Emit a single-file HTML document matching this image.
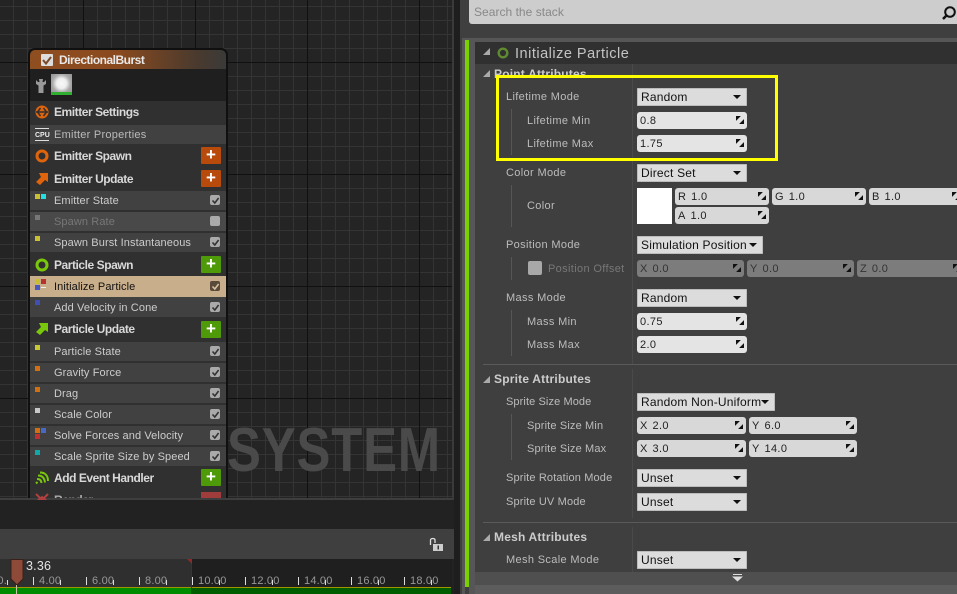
<!DOCTYPE html>
<html><head><meta charset="utf-8"><style>
html,body{margin:0;padding:0;background:#222}
#p{position:relative;width:957px;height:594px;overflow:hidden;background:#222;font-family:"Liberation Sans",sans-serif;font-size:11px;letter-spacing:.35px}
#p div,#p svg{position:absolute}
.t{white-space:nowrap;line-height:14px;height:14px}
.g{background-color:#242424;background-image:linear-gradient(90deg,#101010 1px,transparent 1px),linear-gradient(0deg,transparent 111px,#101010 111px),linear-gradient(90deg,#343434 1px,transparent 1px),linear-gradient(0deg,transparent 13px,#343434 13px);background-size:112px 112px,112px 112px,14px 14px,14px 14px;background-position:83px 0,0 62px,13px 0,0 6px}
.r{left:30px;width:196px}
.h{background:#303030}
.s{background:#414141}
.n{left:54px;color:#ccc;letter-spacing:.1px}
.b{left:54px;color:#d8d8d8;font-weight:bold;font-size:12px;letter-spacing:-.45px}
.c{left:210px;width:10px;height:10px;background:#aaa;border-radius:2px}
.c svg{left:.5px;top:.5px}
.a{left:201px;width:20px;height:17px;border-radius:1px;color:#fff;font:bold 17px/16px "Liberation Sans",sans-serif;text-align:center;letter-spacing:0}
.o{background:#b84a0c}.v{background:#4f9a08}
.dot{width:5px;height:5px}
.l{color:#bcbcbc}
.hb{color:#ccc;font-weight:bold;font-size:12px;left:494px;letter-spacing:.2px}
.f{background:#e4e4e4;border-radius:3px;height:17px;color:#222;line-height:19px;text-indent:3px;white-space:nowrap;word-spacing:-1px}
.d{background:#dcdcdc;height:18px;border-radius:1px;color:#111;font-size:12px;line-height:18px;text-indent:4px;white-space:nowrap;box-shadow:inset 0 0 0 1px #bcbcbc;letter-spacing:.2px}
.d::after{content:"";position:absolute;right:6px;top:7px;border:4px solid transparent;border-top:4px solid #111;border-bottom:0}
.v3{background:#d8d8d8}
.m{background:#7c7c7c;color:#333}
.f svg{right:3px;top:4px}
.tl{color:#999;top:574px;letter-spacing:.2px}
.tk{background:#ddd;width:1px;top:577px;height:8px}
.tm{background:#ddd;width:1px;top:580px;height:5px}
</style></head><body><div id="p">
<svg width="0" height="0"><defs><symbol id="x" viewBox="0 0 9 9"><path d="M0 0H5.500L0 5.500ZM9 9H3.500L9 3.500Z" fill="#111"/></symbol><symbol id="k" viewBox="0 0 9 9"><path d="M1.500 4.500L3.800 7L7.600 2" fill="none" stroke="#333" stroke-width="1.600"/></symbol></defs></svg>

<div class="g" style="left:0;top:0;width:452px;height:498px"></div>
<div style="left:0;top:498px;width:453px;height:2px;background:#3e3e3e"></div>
<div style="left:452px;top:0;width:2px;height:500px;background:#3a3a3a"></div>
<div style="left:454px;top:0;width:6px;height:594px;background:#1e1e1e"></div>
<div class="t" style="left:227px;top:421px;height:60px;font:bold 62px/60px 'Liberation Sans',sans-serif;color:#4a4a4a;transform:scaleX(.82);transform-origin:0 0;letter-spacing:1px">SYSTEM</div>

<!-- node -->
<div style="left:28px;top:48px;width:200px;height:450px;background:#101010;border-radius:7px 7px 0 0"></div>
<div style="left:30px;top:50px;width:196px;height:19px;border-radius:5px 5px 0 0;background:linear-gradient(90deg,#8e4e20,#8a4a1e 45%,#4a3a2e 85%,#3a3a38)"></div>
<div style="left:30px;top:69px;width:196px;height:32px;background:#1f1f1f"></div>
<div style="left:41px;top:54px;width:12px;height:12px;background:#ddd;border-radius:1px"><svg width="12" height="12" style="left:0;top:0"><path d="M2 6L5 9.500L10 3" fill="none" stroke="#7a4a2a" stroke-width="2"/></svg></div>
<div class="t" style="left:59px;top:53px;color:#e8e8e8;font-weight:bold;font-size:12px;letter-spacing:-.5px">DirectionalBurst</div>
<svg width="10" height="14" style="left:36px;top:79px"><path d="M0 1L2 3H3.500L3 0H7L6.500 3H8L10 1V5L7.500 6.500V14H2.500V6.500L0 5Z" fill="#999"/></svg>
<div style="left:51px;top:74px;width:21px;height:21px;background:radial-gradient(circle at 50% 45%,#f8f8f8 0,#eee 5px,#aaa 9px,#8c8c8c 100%)"></div>
<div style="left:51px;top:92px;width:21px;height:3px;background:#30b030"></div>

<div class="r h" style="top:101px;height:24px"></div>
<div class="r s" style="top:125px;height:19px"></div>
<div class="r h" style="top:144px;height:47px"></div>
<div class="r h" style="top:191px;height:61px"></div>
<div class="r s" style="top:191px;height:19px"></div>
<div class="r s" style="top:212px;height:19px;background:#494949"></div>
<div class="r s" style="top:233px;height:19px"></div>
<div class="r h" style="top:252px;height:24px"></div>
<div class="r" style="top:276px;height:21px;background:#c9ae8c"></div>
<div class="r s" style="top:297px;height:20px"></div>
<div class="r h" style="top:317px;height:181px"></div>
<div class="r s" style="top:342px;height:19px"></div>
<div class="r s" style="top:363px;height:19px"></div>
<div class="r s" style="top:384px;height:19px"></div>
<div class="r s" style="top:405px;height:19px"></div>
<div class="r s" style="top:426px;height:19px"></div>
<div class="r s" style="top:447px;height:19px"></div>

<!-- node icons -->
<svg width="14" height="14" style="left:35px;top:105px"><circle cx="7" cy="7" r="6.500" fill="#e0640c"/><path d="M1 7H13" stroke="#303030" stroke-width="1.500"/><path d="M5.500 3L2.500 7L5.500 11M8.500 3L11.500 7L8.500 11" stroke="#303030" stroke-width="1.500" fill="none"/></svg>
<div class="t" style="left:35px;top:128px;width:14px;height:13px;font:bold 7px/13px 'Liberation Sans',sans-serif;color:#eee;letter-spacing:0;border-top:1px solid #ddd;border-bottom:1px solid #ddd;box-sizing:border-box">CPU</div>
<svg width="14" height="14" style="left:35px;top:149px"><circle cx="7" cy="7" r="5" fill="none" stroke="#e0640c" stroke-width="3"/></svg>
<svg width="14" height="14" style="left:35px;top:172px"><path d="M4 1H13V10L10 8L5 13L1 10L6 5Z" fill="#e0640c"/></svg>
<svg width="14" height="14" style="left:35px;top:258px"><circle cx="7" cy="7" r="5" fill="none" stroke="#7ac80c" stroke-width="3"/></svg>
<svg width="14" height="14" style="left:35px;top:322px"><path d="M4 1H13V10L10 8L5 13L1 10L6 5Z" fill="#7ac80c"/></svg>
<svg width="14" height="14" style="left:35px;top:471px"><path d="M1 12.500L2.500 11M2 8C5 8 6 9 6.500 12M3 4.500C7.500 4.500 9.500 7 10 11.500M5 1.500C10.500 1.500 13 5 13 10" stroke="#7ac80c" stroke-width="2" fill="none"/></svg>
<svg width="14" height="9" style="left:35px;top:493px"><path d="M1 1L7 7L13 1M1 9L7 4L13 9" stroke="#b04040" stroke-width="2" fill="none"/></svg>

<div class="dot" style="left:35px;top:194px;background:#c8c030"></div>
<div class="dot" style="left:41px;top:194px;background:#20e0e0"></div>
<div class="dot" style="left:35px;top:215px;background:#777"></div>
<div class="dot" style="left:35px;top:236px;background:#c8c030"></div>
<div class="dot" style="left:35px;top:279px;background:#c8c030"></div>
<div class="dot" style="left:41px;top:279px;background:#b83030"></div>
<div class="dot" style="left:35px;top:285px;background:#4858c0"></div>
<div style="left:41px;top:287px;width:5px;height:1px;background:#eee"></div>
<div class="dot" style="left:35px;top:300px;background:#4050b0"></div>
<div class="dot" style="left:35px;top:345px;background:#c8c830"></div>
<div class="dot" style="left:35px;top:366px;background:#d07010"></div>
<div class="dot" style="left:35px;top:387px;background:#d07010"></div>
<div class="dot" style="left:35px;top:408px;background:#c8c8c8"></div>
<div class="dot" style="left:35px;top:428px;background:#d07010"></div>
<div class="dot" style="left:41px;top:428px;background:#4868c8"></div>
<div class="dot" style="left:35px;top:434px;background:#c03030"></div>
<div class="dot" style="left:35px;top:450px;background:#10a8a8"></div>

<!-- node text -->
<div class="t b" style="top:105px">Emitter Settings</div>
<div class="t n" style="top:128px;color:#bbb;letter-spacing:.25px">Emitter Properties</div>
<div class="t b" style="top:149px">Emitter Spawn</div>
<div class="t b" style="top:172px">Emitter Update</div>
<div class="t n" style="top:194px">Emitter State</div>
<div class="t n" style="top:215px;color:#777">Spawn Rate</div>
<div class="t n" style="top:236px">Spawn Burst Instantaneous</div>
<div class="t b" style="top:258px">Particle Spawn</div>
<div class="t n" style="top:280px;color:#111">Initialize Particle</div>
<div class="t n" style="top:301px">Add Velocity in Cone</div>
<div class="t b" style="top:322px">Particle Update</div>
<div class="t n" style="top:345px">Particle State</div>
<div class="t n" style="top:366px">Gravity Force</div>
<div class="t n" style="top:387px">Drag</div>
<div class="t n" style="top:408px">Scale Color</div>
<div class="t n" style="top:429px">Solve Forces and Velocity</div>
<div class="t n" style="top:450px">Scale Sprite Size by Speed</div>
<div class="t b" style="top:471px">Add Event Handler</div>
<div class="t b" style="top:493px;height:5px;overflow:hidden;color:#aaa">Render</div>

<!-- add buttons -->
<div class="a o" style="top:147px">+</div><div class="a o" style="top:170px">+</div>
<div class="a v" style="top:256px">+</div><div class="a v" style="top:321px">+</div><div class="a v" style="top:469px">+</div>
<div style="left:201px;top:492px;width:20px;height:6px;background:#a03c3c"></div>

<!-- checks -->
<div class="c" style="top:195px"><svg width="9" height="9"><use href="#k"/></svg></div>
<div class="c" style="top:216px"></div>
<div class="c" style="top:237px"><svg width="9" height="9"><use href="#k"/></svg></div>
<div class="c" style="top:281px;background:#5a4a3a"><svg width="9" height="9"><path d="M1.500 4.500L3.800 7L7.600 2" fill="none" stroke="#d8c0a0" stroke-width="1.600"/></svg></div>
<div class="c" style="top:302px"><svg width="9" height="9"><use href="#k"/></svg></div>
<div class="c" style="top:346px"><svg width="9" height="9"><use href="#k"/></svg></div>
<div class="c" style="top:367px"><svg width="9" height="9"><use href="#k"/></svg></div>
<div class="c" style="top:388px"><svg width="9" height="9"><use href="#k"/></svg></div>
<div class="c" style="top:409px"><svg width="9" height="9"><use href="#k"/></svg></div>
<div class="c" style="top:430px"><svg width="9" height="9"><use href="#k"/></svg></div>
<div class="c" style="top:451px"><svg width="9" height="9"><use href="#k"/></svg></div>

<!-- timeline -->
<div style="left:0;top:500px;width:454px;height:29px;background:#222"></div>
<div style="left:0;top:529px;width:454px;height:30px;background:#3f3f3f"></div>
<div style="left:0;top:559px;width:191px;height:28px;background:#2f2f2f"></div>
<div style="left:191px;top:559px;width:261px;height:28px;background:#1f1f1f"></div>
<div style="left:0;top:587px;width:451px;height:1px;background:#a09400"></div>
<div style="left:0;top:588px;width:191px;height:6px;background:#008c00"></div>
<div style="left:191px;top:588px;width:260px;height:6px;background:#005e00"></div>
<div style="left:191px;top:559px;width:1px;height:35px;background:#6a1e1e"></div>
<svg width="5" height="5" style="left:187px;top:559px"><path d="M0 0H5V5Z" fill="#8a2a2a"/></svg>
<div class="t tl" style="left:0;width:7px;overflow:hidden;direction:rtl">.00</div>
<div class="t tl" style="left:39px">4.00</div><div class="t tl" style="left:92px">6.00</div><div class="t tl" style="left:145px">8.00</div>
<div class="t tl" style="left:198px">10.00</div><div class="t tl" style="left:251px">12.00</div><div class="t tl" style="left:304px">14.00</div><div class="t tl" style="left:357px">16.00</div><div class="t tl" style="left:410px">18.00</div>
<div class="tk" style="left:33px"></div><div class="tk" style="left:86px"></div><div class="tk" style="left:139px"></div><div class="tk" style="left:192px"></div><div class="tk" style="left:245px"></div><div class="tk" style="left:298px"></div><div class="tk" style="left:351px"></div><div class="tk" style="left:404px"></div>
<div class="tm" style="left:7px"></div><div class="tm" style="left:60px"></div><div class="tm" style="left:113px"></div><div class="tm" style="left:166px"></div><div class="tm" style="left:219px"></div><div class="tm" style="left:272px"></div><div class="tm" style="left:325px"></div><div class="tm" style="left:378px"></div><div class="tm" style="left:431px"></div>
<svg width="14" height="27" style="left:10px;top:559px"><path d="M1 .5H13V20L7 26L1 20Z" fill="#8e4a38" stroke="#3a2018"/></svg>
<div style="left:16px;top:585px;width:1px;height:9px;background:#c8c8a8"></div>
<div class="t" style="left:26px;top:559px;color:#e4e4e4;font-size:12.500px;letter-spacing:.2px">3.36</div>
<svg width="15" height="15" style="left:429px;top:537px"><path d="M1.500 8V3C1.500 1 6 1 6 3V6" fill="none" stroke="#ddd" stroke-width="1.300"/><rect x="4" y="7" width="10" height="7" fill="#ccc"/><rect x="8.500" y="8.500" width="1.500" height="4" fill="#333"/></svg>

<!-- right panel -->
<div style="left:460px;top:0;width:497px;height:594px;background:#3f3f3f"></div>
<div style="left:462px;top:38px;width:495px;height:4px;background:#565656"></div>
<div style="left:462px;top:38px;width:3px;height:556px;background:#565656"></div>
<div style="left:469px;top:40px;width:6px;height:554px;background:#565656"></div>
<div style="left:465px;top:40px;width:4px;height:547px;background:#78d000"></div>
<div style="left:469px;top:0;width:488px;height:24px;background:#cdcdcd;border-radius:0 0 0 3px"></div>
<div class="t" style="left:474px;top:5px;color:#888;font-size:12px;letter-spacing:.03px">Search the stack</div>
<svg width="16" height="17" style="left:941px;top:4px"><circle cx="9" cy="8" r="4.800" fill="none" stroke="#111" stroke-width="2"/><path d="M5.500 11.500L2 15" stroke="#111" stroke-width="2.500"/></svg>
<div style="left:475px;top:42px;width:482px;height:22px;background:#303030"></div>
<svg width="9" height="9" style="left:482px;top:47px"><path d="M8 1V8H1Z" fill="#aaa"/></svg>
<svg width="12" height="12" style="left:497px;top:47px"><circle cx="6" cy="6" r="4.300" fill="none" stroke="#5f8a30" stroke-width="2.400"/></svg>
<div class="t" style="left:515px;top:46px;color:#c4c4c4;font-size:14.500px;letter-spacing:.5px;height:16px;line-height:16px">Initialize Particle</div>
<div style="left:475px;top:572px;width:482px;height:13px;background:#4f4f4f"></div>
<div style="left:475px;top:585px;width:482px;height:9px;background:#5c5c5c"></div>
<div style="left:632px;top:64px;width:1px;height:300px;background:#4a4a4a"></div>
<div style="left:632px;top:369px;width:1px;height:149px;background:#4a4a4a"></div>
<div style="left:632px;top:527px;width:1px;height:45px;background:#4a4a4a"></div>
<div style="left:511px;top:109px;width:1px;height:46px;background:#565656"></div>
<div style="left:511px;top:185px;width:1px;height:42px;background:#565656"></div>
<div style="left:511px;top:257px;width:1px;height:23px;background:#565656"></div>
<div style="left:511px;top:310px;width:1px;height:46px;background:#565656"></div>
<div style="left:511px;top:414px;width:1px;height:46px;background:#565656"></div>
<div style="left:483px;top:364px;width:474px;height:1px;background:#5a5a5a"></div>
<div style="left:483px;top:522px;width:474px;height:1px;background:#5a5a5a"></div>

<svg width="9" height="9" style="left:482px;top:69px"><path d="M8 1V8H1Z" fill="#aaa"/></svg>
<div class="t hb" style="top:67px">Point Attributes</div>
<svg width="9" height="9" style="left:482px;top:375px"><path d="M8 1V8H1Z" fill="#aaa"/></svg>
<div class="t hb" style="top:372px">Sprite Attributes</div>
<svg width="9" height="9" style="left:482px;top:533px"><path d="M8 1V8H1Z" fill="#aaa"/></svg>
<div class="t hb" style="top:530px">Mesh Attributes</div>

<div class="t l" style="left:506px;top:90px">Lifetime Mode</div>
<div class="t l" style="left:527px;top:114px">Lifetime Min</div>
<div class="t l" style="left:527px;top:137px">Lifetime Max</div>
<div class="t l" style="left:506px;top:166px">Color Mode</div>
<div class="t l" style="left:527px;top:199px">Color</div>
<div class="t l" style="left:506px;top:238px">Position Mode</div>
<div class="t" style="left:548px;top:262px;color:#777">Position Offset</div>
<div class="t l" style="left:506px;top:291px">Mass Mode</div>
<div class="t l" style="left:527px;top:315px">Mass Min</div>
<div class="t l" style="left:527px;top:338px">Mass Max</div>
<div class="t l" style="left:506px;top:395px;letter-spacing:.1px">Sprite Size Mode</div>
<div class="t l" style="left:527px;top:419px;letter-spacing:.15px">Sprite Size Min</div>
<div class="t l" style="left:527px;top:442px;letter-spacing:.15px">Sprite Size Max</div>
<div class="t l" style="left:506px;top:471px;letter-spacing:.15px">Sprite Rotation Mode</div>
<div class="t l" style="left:506px;top:495px;letter-spacing:.15px">Sprite UV Mode</div>
<div class="t l" style="left:506px;top:553px">Mesh Scale Mode</div>
<div style="left:528px;top:261px;width:14px;height:14px;background:#a8a8a8;border-radius:2px"></div>

<div class="d" style="left:637px;top:88px;width:110px">Random</div>
<div class="f" style="left:637px;top:112px;width:110px">0.8<svg width="8" height="8"><use href="#x"/></svg></div>
<div class="f" style="left:637px;top:135px;width:110px">1.75<svg width="8" height="8"><use href="#x"/></svg></div>
<div class="d" style="left:637px;top:164px;width:110px">Direct Set</div>
<div style="left:637px;top:188px;width:35px;height:36px;background:#fff"></div>
<div class="f v3" style="left:675px;top:188px;width:94px">R&nbsp; 1.0<svg width="8" height="8"><use href="#x"/></svg></div>
<div class="f v3" style="left:772px;top:188px;width:94px">G&nbsp; 1.0<svg width="8" height="8"><use href="#x"/></svg></div>
<div class="f v3" style="left:869px;top:188px;width:94px">B&nbsp; 1.0<svg width="8" height="8"><use href="#x"/></svg></div>
<div class="f v3" style="left:675px;top:207px;width:94px">A&nbsp; 1.0<svg width="8" height="8"><use href="#x"/></svg></div>
<div class="d" style="left:637px;top:236px;width:126px">Simulation Position</div>
<div class="f m" style="left:637px;top:260px;width:107px">X&nbsp; 0.0<svg width="8" height="8"><use href="#x"/></svg></div>
<div class="f m" style="left:747px;top:260px;width:107px">Y&nbsp; 0.0<svg width="8" height="8"><use href="#x"/></svg></div>
<div class="f m" style="left:857px;top:260px;width:107px">Z&nbsp; 0.0<svg width="8" height="8"><use href="#x"/></svg></div>
<div class="d" style="left:637px;top:289px;width:110px">Random</div>
<div class="f" style="left:637px;top:313px;width:110px">0.75<svg width="8" height="8"><use href="#x"/></svg></div>
<div class="f" style="left:637px;top:336px;width:110px">2.0<svg width="8" height="8"><use href="#x"/></svg></div>
<div class="d" style="left:637px;top:393px;width:138px">Random Non-Uniform</div>
<div class="f v3" style="left:637px;top:417px;width:109px">X&nbsp; 2.0<svg width="8" height="8"><use href="#x"/></svg></div>
<div class="f v3" style="left:749px;top:417px;width:108px">Y&nbsp; 6.0<svg width="8" height="8"><use href="#x"/></svg></div>
<div class="f v3" style="left:637px;top:440px;width:109px">X&nbsp; 3.0<svg width="8" height="8"><use href="#x"/></svg></div>
<div class="f v3" style="left:749px;top:440px;width:108px">Y&nbsp; 14.0<svg width="8" height="8"><use href="#x"/></svg></div>
<div class="d" style="left:637px;top:469px;width:110px">Unset</div>
<div class="d" style="left:637px;top:493px;width:110px">Unset</div>
<div class="d" style="left:637px;top:551px;width:110px">Unset</div>
<svg width="11" height="8" style="left:732px;top:574px"><path d="M1 0H10V1H1ZM0 2.500H11L5.500 7.500Z" fill="#ddd"/></svg>

<div style="left:496px;top:75px;width:276px;height:80px;border:3px solid #ff0"></div>
</div></body></html>
